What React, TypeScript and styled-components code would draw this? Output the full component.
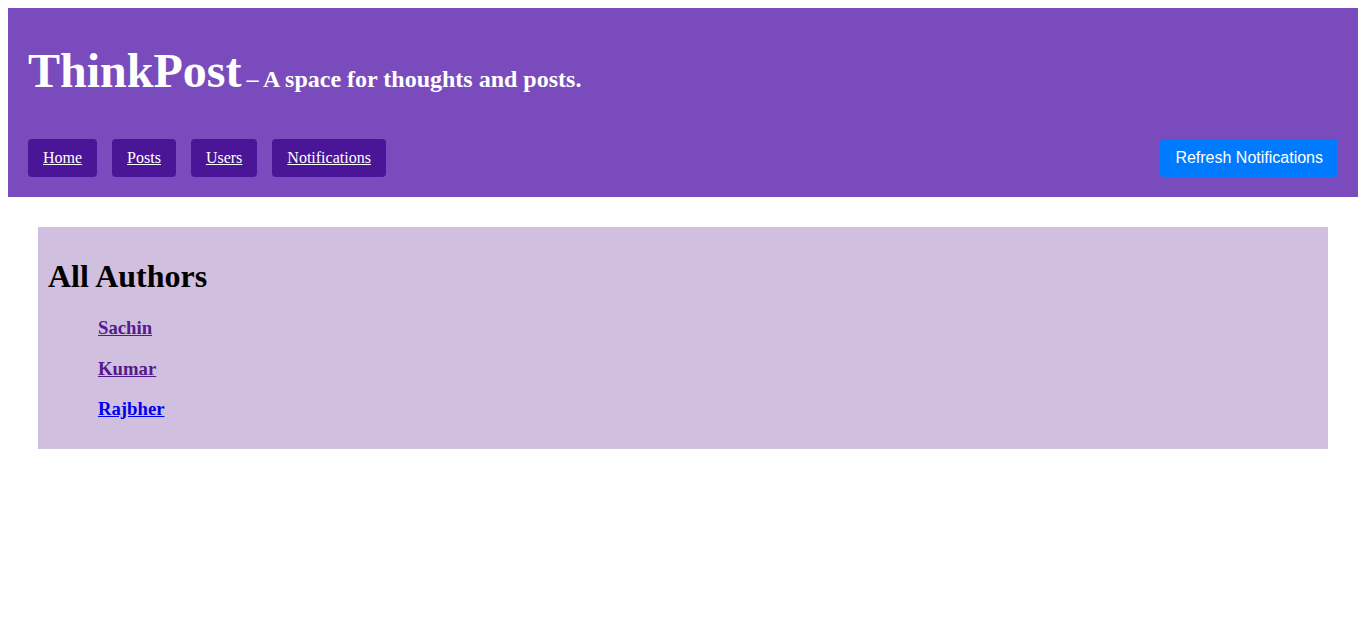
import React from "react";
import styled, { createGlobalStyle } from "styled-components";

const Global = createGlobalStyle`
  body {
    margin: 8px;
    font-family: "Liberation Serif", "Times New Roman", serif;
    background: #ffffff;
  }
`;

const Header = styled.header`
  background: #794bbc;
  padding: 20px;
  color: #ffffff;
`;

const TitleRow = styled.div`
  display: flex;
  align-items: baseline;
  margin: 15px 0 41px;
`;

const Title = styled.h1`
  margin: 0;
  font-size: 48px;
  font-weight: bold;
  line-height: normal;
`;

const Tagline = styled.span`
  margin-left: 5px;
  font-size: 24px;
  font-weight: bold;
`;

const NavBar = styled.nav`
  display: flex;
  align-items: center;
  justify-content: space-between;
`;

const NavLinks = styled.div`
  display: flex;
  gap: 15px;
`;

const NavLink = styled.a`
  display: block;
  background: #4a1596;
  color: #ffffff;
  text-decoration: underline;
  font-size: 16px;
  line-height: 18px;
  padding: 10px 15px;
  border-radius: 4px;
`;

const RefreshButton = styled.button`
  background: #007bff;
  color: #ffffff;
  border: none;
  border-radius: 4px;
  font-family: "Liberation Sans", Arial, sans-serif;
  font-size: 16px;
  line-height: 18px;
  padding: 10px 15px;
  cursor: pointer;
`;

const Main = styled.main`
  margin: 30px;
  background: #d1bfe0;
  padding: 10px;
`;

const Heading = styled.h1`
  margin: 0.67em 0;
  font-size: 32px;
  font-weight: bold;
`;

const AuthorList = styled.ul`
  list-style: none;
  margin: 16px 0;
  padding-left: 50px;
`;

const AuthorName = styled.h3`
  margin: 1em 0;
  font-size: 18.72px;
  font-weight: bold;
`;

const AuthorLink = styled.a<{ $visited?: boolean }>`
  color: ${(p) => (p.$visited ? "#551a8b" : "#0000ee")};
  text-decoration: underline;
`;

const authors = [
  { name: "Sachin", visited: true },
  { name: "Kumar", visited: true },
  { name: "Rajbher", visited: false },
];

export default function App() {
  return (
    <>
      <Global />
      <Header>
        <TitleRow>
          <Title>ThinkPost</Title>
          <Tagline>– A space for thoughts and posts.</Tagline>
        </TitleRow>
        <NavBar>
          <NavLinks>
            <NavLink href="#">Home</NavLink>
            <NavLink href="#">Posts</NavLink>
            <NavLink href="#">Users</NavLink>
            <NavLink href="#">Notifications</NavLink>
          </NavLinks>
          <RefreshButton>Refresh Notifications</RefreshButton>
        </NavBar>
      </Header>
      <Main>
        <Heading>All Authors</Heading>
        <AuthorList>
          {authors.map((a) => (
            <li key={a.name}>
              <AuthorName>
                <AuthorLink href="#" $visited={a.visited}>
                  {a.name}
                </AuthorLink>
              </AuthorName>
            </li>
          ))}
        </AuthorList>
      </Main>
    </>
  );
}
